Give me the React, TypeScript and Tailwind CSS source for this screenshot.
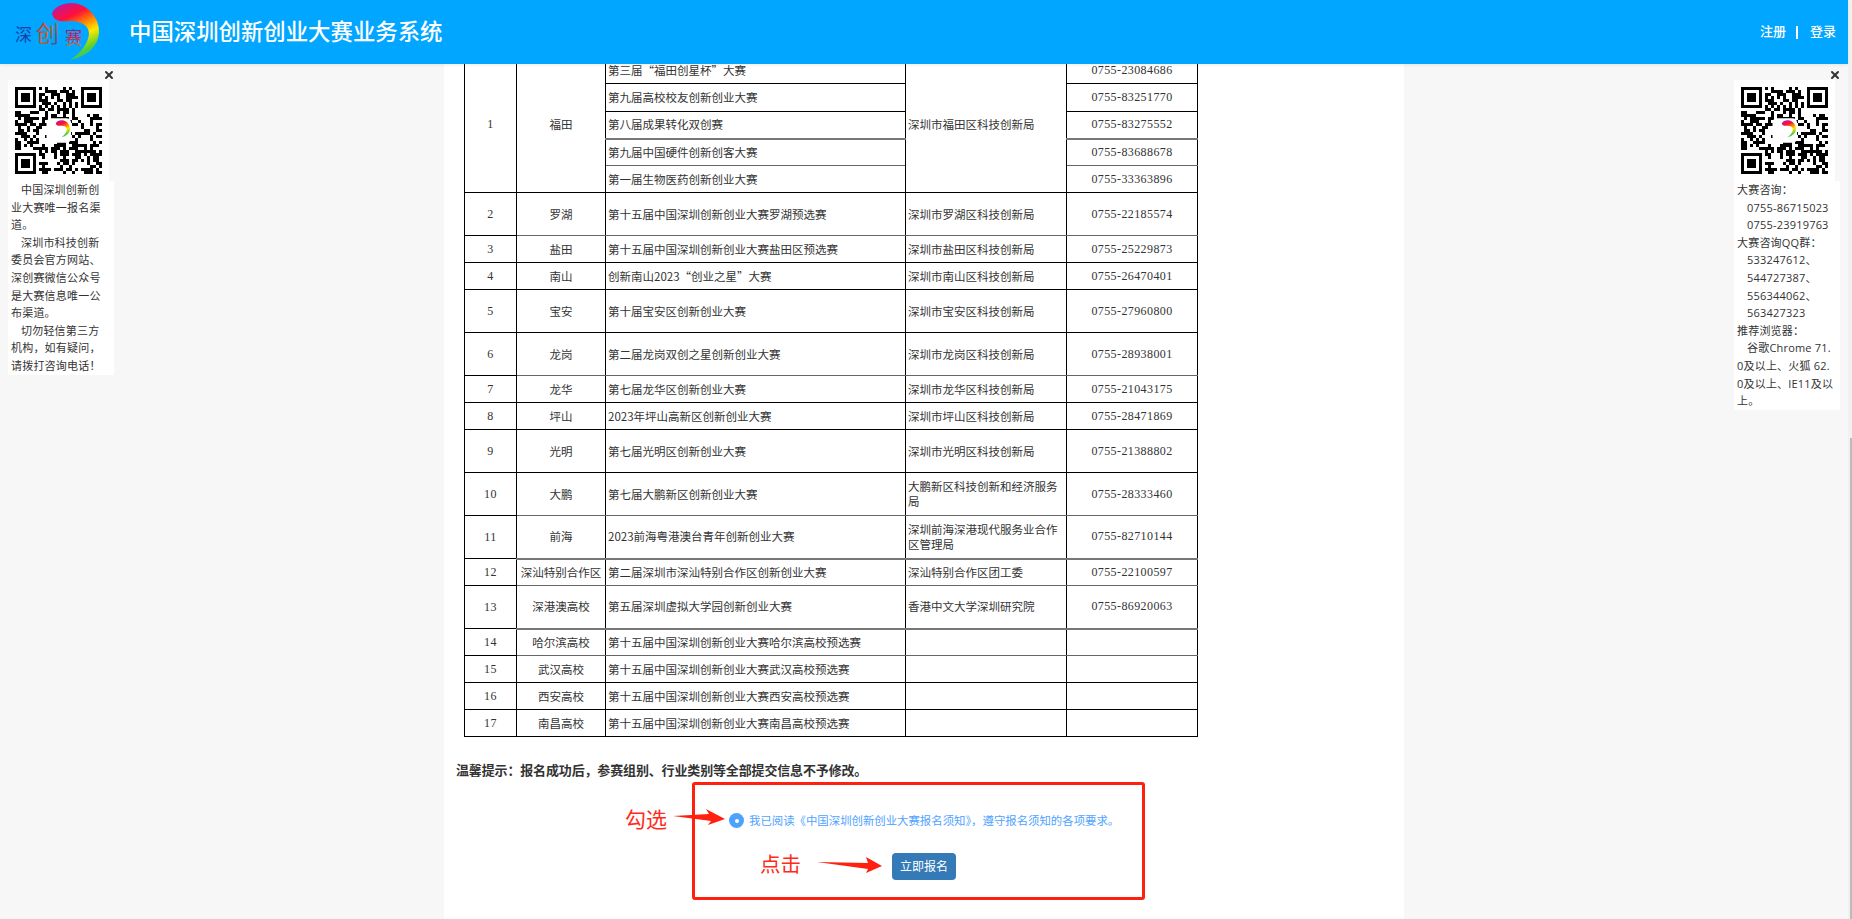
import { X } from "lucide-react";

type Row = {
  no?: string;
  district?: string;
  span?: number;
  name: string;
  org?: string;
  orgSpan?: number;
  phone?: string;
  h: string;
  line?: string;
};

const GREY2 = "border-b-2 border-b-[#777]";
const GREY1 = "border-b-[#666]";

const ROWS: Row[] = [
  { no: "1", district: "福田", span: 5, name: "第三届“福田创星杯”大赛", org: "深圳市福田区科技创新局", orgSpan: 5, phone: "0755-23084686", h: "h-[27px]" },
  { name: "第九届高校校友创新创业大赛", phone: "0755-83251770", h: "h-[28px]" },
  { name: "第八届成果转化双创赛", phone: "0755-83275552", h: "h-[27px]", line: GREY2 },
  { name: "第九届中国硬件创新创客大赛", phone: "0755-83688678", h: "h-[27px]", line: GREY1 },
  { name: "第一届生物医药创新创业大赛", phone: "0755-33363896", h: "h-[27px]" },
  { no: "2", district: "罗湖", name: "第十五届中国深圳创新创业大赛罗湖预选赛", org: "深圳市罗湖区科技创新局", phone: "0755-22185574", h: "h-[43px]", line: GREY1 },
  { no: "3", district: "盐田", name: "第十五届中国深圳创新创业大赛盐田区预选赛", org: "深圳市盐田区科技创新局", phone: "0755-25229873", h: "h-[27px]" },
  { no: "4", district: "南山", name: "创新南山2023“创业之星”大赛", org: "深圳市南山区科技创新局", phone: "0755-26470401", h: "h-[27px]" },
  { no: "5", district: "宝安", name: "第十届宝安区创新创业大赛", org: "深圳市宝安区科技创新局", phone: "0755-27960800", h: "h-[43px]" },
  { no: "6", district: "龙岗", name: "第二届龙岗双创之星创新创业大赛", org: "深圳市龙岗区科技创新局", phone: "0755-28938001", h: "h-[43px]", line: GREY1 },
  { no: "7", district: "龙华", name: "第七届龙华区创新创业大赛", org: "深圳市龙华区科技创新局", phone: "0755-21043175", h: "h-[27px]" },
  { no: "8", district: "坪山", name: "2023年坪山高新区创新创业大赛", org: "深圳市坪山区科技创新局", phone: "0755-28471869", h: "h-[27px]" },
  { no: "9", district: "光明", name: "第七届光明区创新创业大赛", org: "深圳市光明区科技创新局", phone: "0755-21388802", h: "h-[43px]" },
  { no: "10", district: "大鹏", name: "第七届大鹏新区创新创业大赛", org: "大鹏新区科技创新和经济服务局", phone: "0755-28333460", h: "h-[43px]", line: GREY1 },
  { no: "11", district: "前海", name: "2023前海粤港澳台青年创新创业大赛", org: "深圳前海深港现代服务业合作区管理局", phone: "0755-82710144", h: "h-[43px]", line: GREY2 },
  { no: "12", district: "深汕特别合作区", name: "第二届深圳市深汕特别合作区创新创业大赛", org: "深汕特别合作区团工委", phone: "0755-22100597", h: "h-[27px]", line: GREY1 },
  { no: "13", district: "深港澳高校", name: "第五届深圳虚拟大学园创新创业大赛", org: "香港中文大学深圳研究院", phone: "0755-86920063", h: "h-[43px]", line: GREY2 },
  { no: "14", district: "哈尔滨高校", name: "第十五届中国深圳创新创业大赛哈尔滨高校预选赛", org: "", phone: "", h: "h-[27px]", line: GREY1 },
  { no: "15", district: "武汉高校", name: "第十五届中国深圳创新创业大赛武汉高校预选赛", org: "", phone: "", h: "h-[27px]" },
  { no: "16", district: "西安高校", name: "第十五届中国深圳创新创业大赛西安高校预选赛", org: "", phone: "", h: "h-[27px]" },
  { no: "17", district: "南昌高校", name: "第十五届中国深圳创新创业大赛南昌高校预选赛", org: "", phone: "", h: "h-[27px]" },
];

const QR_SIZE = 29;

// not a scannable code, only the look of one
function buildQrPath() {
  let seed = 20231;
  const next = () => {
    seed = (seed * 1103515245 + 12345) & 0x7fffffff;
    return (seed >> 16) & 1;
  };
  const inFinder = (x: number, y: number) =>
    (x < 8 && y < 8) || (x > 20 && y < 8) || (x < 8 && y > 20);
  let d = "";
  for (let y = 0; y < QR_SIZE; y++) {
    for (let x = 0; x < QR_SIZE; x++) {
      const bit = next();
      if (inFinder(x, y)) continue;
      if (y === 6 ? x % 2 === 0 : x === 6 ? y % 2 === 0 : bit) {
        d += `M${x} ${y}h1v1h-1z`;
      }
    }
  }
  for (const [fx, fy] of [[0, 0], [22, 0], [0, 22]]) {
    d += `M${fx} ${fy}h7v7h-7zM${fx + 1} ${fy + 1}v5h5v-5zM${fx + 2} ${fy + 2}h3v3h-3z`;
  }
  return d;
}

const QR_PATH = buildQrPath();

function ArcPath() {
  return (
    <path d="M44 13C48 5 60 1 70 4C82 7 92 20 91 33C90 46 80 56 62 60C72 54 80 44 81 34C81 26 74 21 62 21C52 22 45 21 44 13Z" />
  );
}

function QrCode() {
  return (
    <svg width="87" height="87" viewBox="0 0 29 29" shapeRendering="crispEdges" className="block">
      <path d={QR_PATH} fill="#000" fillRule="evenodd" />
      <rect x="10.5" y="10.4" width="8.2" height="8.2" rx="1.6" fill="#fff" shapeRendering="auto" />
      <g transform="translate(9.2 10.8) scale(0.1)" fill="url(#arc)" shapeRendering="auto">
        <ArcPath />
      </g>
    </svg>
  );
}

function Logo() {
  return (
    <svg width="100" height="64" viewBox="0 0 100 64" className="shrink-0">
      <defs>
        <linearGradient id="arc" gradientUnits="userSpaceOnUse" x1="45" y1="8" x2="72" y2="62">
          <stop offset="0" stopColor="#c0189a" />
          <stop offset="0.25" stopColor="#ff1038" />
          <stop offset="0.45" stopColor="#ff8a00" />
          <stop offset="0.62" stopColor="#ffe800" />
          <stop offset="0.85" stopColor="#58d030" />
          <stop offset="1" stopColor="#20c0a0" />
        </linearGradient>
        <linearGradient id="chuang" x1="0" y1="0" x2="1" y2="1">
          <stop offset="0" stopColor="#e01040" />
          <stop offset="0.5" stopColor="#d06020" />
          <stop offset="1" stopColor="#1850b0" />
        </linearGradient>
        <linearGradient id="sai" x1="0" y1="0" x2="0" y2="1">
          <stop offset="0" stopColor="#702080" />
          <stop offset="0.6" stopColor="#e02050" />
          <stop offset="1" stopColor="#f09000" />
        </linearGradient>
      </defs>
      <g fill="url(#arc)">
        <ArcPath />
      </g>
      <g fontFamily="'Noto Sans CJK SC', sans-serif">
        <text x="7" y="41" fontSize="17" fill="#1a3fa8">深</text>
        <text x="28" y="42" fontSize="23" fill="url(#chuang)">创</text>
        <text x="57" y="44" fontSize="17" fill="url(#sai)">赛</text>
      </g>
    </svg>
  );
}

function SidePanel({ side, lines }: { side: string; lines: string[] }) {
  return (
    <aside className={`absolute top-[80px] z-20 w-[106px] ${side}`}>
      <X size={12} strokeWidth={4} className="absolute -top-[11px] left-[95px] text-[#333]" />
      <div className="h-[101px] w-[101px] bg-white pl-[7px] pt-[7px]">
        <QrCode />
      </div>
      <div className="bg-white pl-[3px] pr-[6px] text-[11px] leading-[17.6px] tracking-[0.2px] text-[#333] break-all">
        {lines.map((line, i) =>
          line.startsWith(" ") ? (
            <p key={i} className="indent-[10px]">{line.trim()}</p>
          ) : (
            <p key={i}>{line}</p>
          )
        )}
      </div>
    </aside>
  );
}

const LEFT_LINES = [
  " 中国深圳创新创业大赛唯一报名渠道。",
  " 深圳市科技创新委员会官方网站、深创赛微信公众号是大赛信息唯一公布渠道。",
  " 切勿轻信第三方机构，如有疑问，请拨打咨询电话！",
];

const RIGHT_LINES = [
  "大赛咨询：",
  " 0755-86715023",
  " 0755-23919763",
  "大赛咨询QQ群：",
  " 533247612、",
  " 544727387、",
  " 556344062、",
  " 563427323",
  "推荐浏览器：",
  " 谷歌Chrome 71.0及以上、火狐 62.0及以上、IE11及以上。",
];

function ContestTable() {
  const cell = "border border-black text-[#333]";
  const num = "text-center font-['Liberation_Serif','Noto_Sans_CJK_SC',serif] text-[12px] tracking-[0.4px]";
  return (
    <table className="ml-[20px] w-[733px] table-fixed border-collapse font-['Noto_Sans_CJK_SC',sans-serif] text-[11.5px] leading-[15px]">
      <colgroup>
        <col className="w-[52px]" />
        <col className="w-[89px]" />
        <col className="w-[300px]" />
        <col className="w-[161px]" />
        <col className="w-[131px]" />
      </colgroup>
      <tbody>
        {ROWS.map((r) => (
          <tr key={r.name} className={r.h}>
            {r.no && (
              <td rowSpan={r.span} className={`${cell} ${num}`}>{r.no}</td>
            )}
            {r.district && (
              <td rowSpan={r.span} className={`${cell} text-center whitespace-nowrap ${r.span ? "" : r.line ?? ""}`}>
                {r.district}
              </td>
            )}
            <td className={`${cell} px-[2px] whitespace-nowrap ${r.line ?? ""}`}>{r.name}</td>
            {r.org !== undefined && (
              <td rowSpan={r.orgSpan} className={`${cell} px-[2px] ${r.orgSpan ? "" : r.line ?? ""}`}>{r.org}</td>
            )}
            <td className={`${cell} ${num} ${r.line ?? ""}`}>{r.phone}</td>
          </tr>
        ))}
      </tbody>
    </table>
  );
}

function SignupBox() {
  return (
    <div className="relative ml-[248px] mt-[2px] h-[118px] w-[453px] rounded-[3px] border-[3px] border-[#ff2010] pl-[34px] pt-[28px]">
      <span className="absolute left-[-70px] top-[22px] text-[21px] leading-[24px] text-[#ff2a1a]">勾选</span>
      <svg width="54" height="18" viewBox="0 0 54 18" className="absolute left-[-23px] top-[23px]" fill="#ff2010">
        <polygon points="1,8 37,6 34,1 53,11 36,17 39,13" />
      </svg>
      <div className="flex items-center gap-[5px]">
        <span className="flex h-[15px] w-[15px] items-center justify-center rounded-full bg-[#4ea2ff]">
          <span className="h-[4px] w-[4px] rounded-full bg-white" />
        </span>
        <span className="text-[11.4px] leading-[15px] text-[#4ea2ff]">
          我已阅读《中国深圳创新创业大赛报名须知》，遵守报名须知的各项要求。
        </span>
      </div>
      <span className="absolute left-[65px] top-[67px] text-[20.5px] leading-[24px] text-[#ff2a1a]">点击</span>
      <svg width="67" height="18" viewBox="0 0 67 18" className="absolute left-[121px] top-[71px]" fill="#ff2010">
        <polygon points="1,6 52,7 50,1 66,10 50,17 52,13" />
      </svg>
      <button className="ml-[163px] mt-[25px] block h-[27px] w-[64px] rounded-[4px] bg-[#337ab7] text-[12px] text-white">
        立即报名
      </button>
    </div>
  );
}

export default function App() {
  return (
    <div className="flex h-screen overflow-hidden bg-[#f7f7f7] font-['Open_Sans','Noto_Sans_CJK_SC',sans-serif]">
      <div className="relative flex min-w-0 flex-1 flex-col">
        <header className="relative z-10 flex h-[64px] shrink-0 items-center bg-[#00a6ff] pl-[8px] pr-[12px] text-white shadow-[0_1px_3px_rgba(0,0,0,0.08)]">
          <Logo />
          <h1 className="ml-[21px] text-[22.4px] font-medium">中国深圳创新创业大赛业务系统</h1>
          <nav className="ml-auto flex items-center text-[13px] font-medium">
            <a>注册</a>
            <span className="mx-[10px] h-[13px] w-[2px] bg-white" />
            <a className="ml-[2px]">登录</a>
          </nav>
        </header>

        <div className="flex min-h-0 flex-1 justify-center overflow-hidden">
          <main className="w-[960px] bg-white">
            <div className="-mt-[8px]">
              <ContestTable />
            </div>
            <p className="ml-[12px] mt-[23px] text-[13px] font-bold leading-[20px] tracking-[-0.15px] text-[#333]">
              温馨提示：报名成功后，参赛组别、行业类别等全部提交信息不予修改。
            </p>
            <SignupBox />
          </main>
        </div>

        <SidePanel side="left-[8px]" lines={LEFT_LINES} />
        <SidePanel side="right-[8px]" lines={RIGHT_LINES} />
      </div>

      {/* page scrollbar, scrolled to the end */}
      <div className="flex w-[4px] shrink-0 flex-col items-end justify-end bg-[#f1f1f1]">
        <div className="h-[481px] w-[2px] bg-[#bbb]" />
      </div>
    </div>
  );
}
